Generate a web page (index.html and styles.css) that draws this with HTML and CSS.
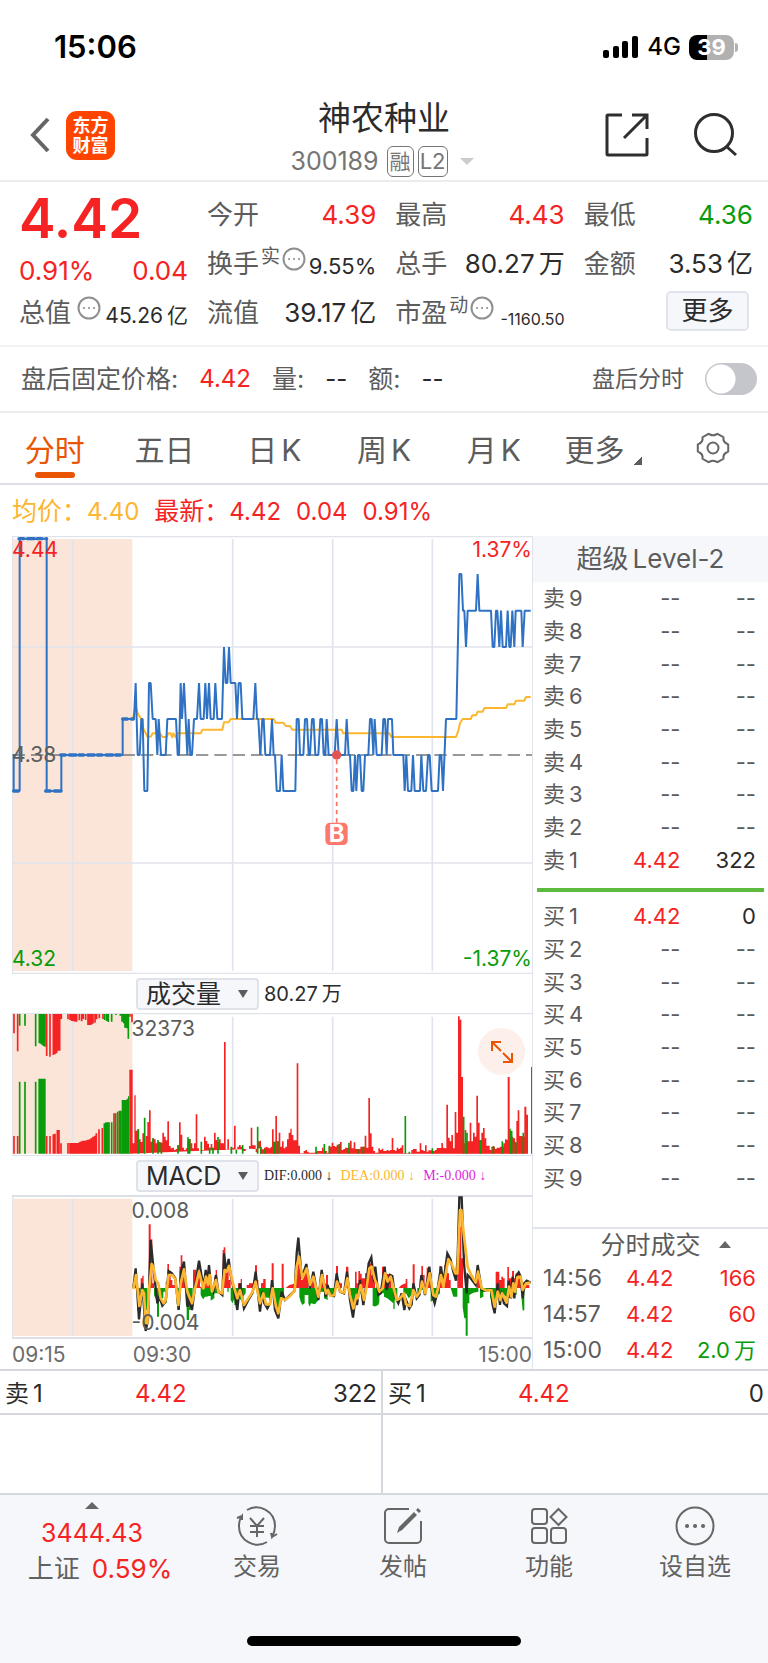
FILE: index.html
```html
<!DOCTYPE html>
<html lang="zh-CN">
<head>
<meta charset="utf-8">
<meta name="viewport" content="width=device-width, initial-scale=1">
<title>神农种业 300189</title>
<link rel="stylesheet" href="styles.css">
</head>
<body>
<div class="status">
  <span class="clock">15:06</span>
  <div class="status-right">
    <svg class="signal" viewBox="0 0 36 22" aria-hidden="true"><rect x="0" y="14" width="6" height="8" rx="2"/><rect x="10" y="10" width="6" height="12" rx="2"/><rect x="19" y="5" width="6" height="17" rx="2"/><rect x="29" y="0" width="6" height="22" rx="2"/></svg>
    <span class="network">4G</span>
    <span class="battery">39</span>
  </div>
</div>

<header class="header">
  <div class="header-side">
    <button class="icon-btn" type="button" aria-label="返回"><svg class="back" viewBox="0 0 20 36"><path d="M18 2 3 18l15 16"/></svg></button>
    <span class="logo">东方<br>财富</span>
  </div>
  <div class="header-title">
    <h1>神农种业</h1>
    <div class="code"><span>300189</span><span class="tag">融</span><span class="tag tag-wide">L2</span><i class="caret"></i></div>
  </div>
  <div class="header-side header-actions">
    <button class="icon-btn" type="button" aria-label="分享"><svg class="action" viewBox="0 0 44 44"><path d="M17 2H3a1 1 0 0 0-1 1v38a1 1 0 0 0 1 1h38a1 1 0 0 0 1-1V25M27 2h15v14M41 3 19 25"/></svg></button>
    <button class="icon-btn" type="button" aria-label="搜索"><svg class="action" viewBox="0 0 44 44"><circle cx="21" cy="20" r="18.500"/><path d="m33 33 10 9"/></svg></button>
  </div>
</header>

<section class="summary">
  <div class="price">
    <strong class="price-now">4.42</strong>
    <div class="row price-change"><span>0.91%</span><span>0.04</span></div>
    <div class="row total"><span class="label">总值 <svg class="more" viewBox="0 0 24 24"><circle cx="12" cy="12" r="10.500"/><path d="M7 12h.1M12 12h.1M17 12h.1"/></svg></span><span class="mid">45.26<span class="unit">亿</span></span></div>
  </div>
  <div class="stats">
    <div class="row"><span class="label">今开</span><span class="up">4.39</span></div>
    <div class="row"><span class="label">最高</span><span class="up">4.43</span></div>
    <div class="row"><span class="label">最低</span><span class="down">4.36</span></div>
    <div class="row"><span class="label">换手<sup>实</sup><svg class="more" viewBox="0 0 24 24"><circle cx="12" cy="12" r="10.500"/><path d="M7 12h.1M12 12h.1M17 12h.1"/></svg></span><span class="mid">9.55%</span></div>
    <div class="row"><span class="label">总手</span><span>80.27<span class="unit">万</span></span></div>
    <div class="row"><span class="label">金额</span><span>3.53<span class="unit">亿</span></span></div>
    <div class="row"><span class="label">流值</span><span>39.17<span class="unit">亿</span></span></div>
    <div class="row"><span class="label">市盈<sup>动</sup><svg class="more" viewBox="0 0 24 24"><circle cx="12" cy="12" r="10.500"/><path d="M7 12h.1M12 12h.1M17 12h.1"/></svg></span><span class="tiny">-1160.50</span></div>
    <div class="row row-end"><button class="more-btn" type="button">更多</button></div>
  </div>
</section>

<section class="after">
  <span class="label">盘后固定价格:</span><span class="up">4.42</span>
  <span class="label">量:</span><span>--</span>
  <span class="label">额:</span><span>--</span>
  <label class="after-switch" for="after-toggle">盘后分时</label>
  <input class="toggle" id="after-toggle" type="checkbox" role="switch">
</section>

<nav class="tabs">
  <a class="active" href="#minute">分时</a>
  <a href="#five">五日</a>
  <a href="#day">日<span class="unit">K</span></a>
  <a href="#week">周<span class="unit">K</span></a>
  <a href="#month">月<span class="unit">K</span></a>
  <a href="#more">更多<i class="corner"></i></a>
  <button class="icon-btn" type="button" aria-label="设置"><svg class="gear" viewBox="0 0 34 32"><path d="M14 2.500q3 1.600 6 0l1.500-.7 6 3.400-.1 2q.3 3 3 4.300l1.800 1v7l-1.800 1q-2.700 1.300-3 4.300l.1 2-6 3.400-1.500-.7q-3-1.600-6 0l-1.500.7-6-3.400.1-2q-.3-3-3-4.300l-1.800-1v-7l1.800-1q2.700-1.300 3-4.300l-.1-2 6-3.400z"/><circle cx="17" cy="16" r="5.500"/></svg></button>
</nav>

<div class="legend">
  <span class="avg">均价：<b>4.40</b></span>
  <span class="up">最新：<b>4.42</b></span>
  <span class="up"><b>0.04</b></span>
  <span class="up"><b>0.91%</b></span>
</div>

<main class="market">
  <div class="charts">
    <div class="plot">
      <svg viewBox="36 18 1560 1314" role="img" aria-label="分时走势">
        <path class="frame" d="M36 20H1596M36 1330H1596M38 20V1330"/>
        <rect class="auction" x="39" y="27" width="358" height="1296"/>
        <path class="grid-line" d="M218 27V1323M698 27V1323M998 27V1323M1297 27V1323M38 351H1596M38 999H1596"/>
        <path class="middle" d="M38 675H1596"/>
        <path class="average" d="M398 567 407 530 413 550 422 565 430 595 442 620H452L458 610H480L487 621H500L505 610H512L517 622 520 610 527 622 532 610H602L607 599H667L672 577H686L692 567H822L826 578H850L857 588H870L877 599H1025L1030 610H1168L1174 621H1368L1374 605 1380 580 1388 567H1412L1417 556H1428L1433 545H1448L1453 534H1518L1523 523H1543L1548 512H1573L1578 501H1592"/>
        <path class="line auction-line" d="M57 26H140M137 783H184M182 675H368M41 783H59M368 567H400"/>
        <path class="line" d="M41 672V783H59V26H140V783H184V675H368V567H402L407 459 413 675H419L424 567H428L433 783H442L447 459H452L458 567H467L472 675 476 567 483 675H497L502 567H528L533 675H537L542 459 546 567 552 459 557 567 562 675 566 567 571 675H576L582 567H591L597 459 602 567H611L616 459 621 567 627 459 632 567H641L646 459 652 567H666L672 351 677 459H682L687 351 692 459H706L711 567 716 459H722L727 567H760L766 459 771 567H775L781 675"/>
        <path class="line" transform="translate(780 0)" d="M1 675 7 567H11L16 675H30L36 567 41 675H45L50 783H60L65 675 70 783H106L110 567H116L120 675H130L135 567H141L146 675H150L156 567H161L166 675H175L181 567H186L191 675H196L200 567 206 675H224L230 567 236 675H255L260 567 266 675H270L275 783H280L285 675 289 783 294 675H300L305 783H310L315 675H325L330 567H335L340 675 344 567 350 675H365L370 567H375L380 675 384 567H396L400 675H430L434 783 439 675 444 783H454L459 675 464 783H480L484 675 490 783H498L504 675H509L515 783H534L539 675H544L549 783 558 567H589L598 132H604L609 242H613L618 351 623 242H648L653 132 658 242H693L698 351H703L708 242H712L718 351 723 242 728 351H738L743 242 748 351H752L757 242 763 351 767 242H784L788 351 794 242H812"/>
        <path class="pin-line" d="M1010 690V880"/>
        <circle class="pin-dot" cx="1010" cy="675" r="14"/>
        <rect class="pin-box" x="976" y="878" width="67" height="67" rx="14"/>
        <text class="pin-text" x="1010" y="936" text-anchor="middle">B</text>
      </svg>
      <span class="mark top-left up">4.44</span>
      <span class="mark top-right up">1.37%</span>
      <span class="mark mid-left">4.38</span>
      <span class="mark bottom-left down">4.32</span>
      <span class="mark bottom-right down">-1.37%</span>
    </div>

    <div class="tools">
      <span class="picker"><select aria-label="指标一"><option>成交量</option></select></span>
      <span>80.27<span class="unit">万</span></span>
    </div>
    <div class="plot">
      <svg viewBox="36 129 1560 429" role="img" aria-label="成交量">
        <path class="frame" d="M36 131H1596M36 557H1596M38 131V557"/>
        <rect class="auction" x="39" y="133" width="358" height="418"/>
        <path class="grid-line" d="M218 140V551M698 140V551M998 140V551M1297 140V551"/>
        <path class="bars bars-up" d="M42 132V190M53 132V244M140 132V258M150 132V260M160 132V255M165 132V253M170 132V250M175 132V242M179 132V242M184 132V147M204 132V148M210 132V150M215 132V153M220 132V154M225 132V155M230 132V155M238 132V151M245 132V154M250 132V147M257 132V150M264 132V165M269 132V165M274 132V164M279 132V161M285 132V158M290 132V148M298 132V145M309 132V147M390 132V140M396 132V157M42 498V551M53 498V551M140 498V551M150 498V551M160 493V551M165 491V551M172 480V551M177 480V551M183 520V551M204 519V551M210 519V551M215 519V551M220 519V551M225 519V551M230 519V551M235 519V551M239 516V551M244 514V551M249 512V551M254 512V551M259 511V551M264 509V551M269 508V551M274 504V551M279 500V551M284 497V551M289 490V551M297 478V551M307 474V551M342 430V551M353 425V551"/>
        <path class="bars bars-down" d="M59 132V167M75 132V167M107 132V229M118 132V220M122 132V221M126 132V224M130 132V228M135 132V230M314 132V150M320 132V153M325 132V156M335 132V155M348 132V135M361 132V137M366 132V155M371 132V160M375 132V173M380 132V175M385 132V206M59 335V551M75 335V551M107 335V551M313 460V551M318 457V551M323 457V551M327 457V551M335 457V551M347 430V551M358 422V551M363 422V551"/>
        <path class="fill-down" d="M115 551V326H137V551ZM365 551V390H380V386H384V379H388V551Z"/>
        <path class="fill-up" d="M388 551V299H398V520H403V376H407V482H412V478H417V508H422V516H427V490H432V550H437V498H442V456H447V421H452V515H457V505H462V508H467V520H472V515H477V516H482V518H487V488H492V500H497V511H502V454H507V528H512V535H517V533H522V540H527V537H532V526H537V457H542V494H547V533H552V540H557V535H562V515H567V507H572V520H577V535H582V520H587V433H592V535H597V542H602V540H612V500H617V513H622V521H627V533H632V522H637V533H642V488H647V510H652V515H657V508H662V520H667V520H672V216H677V540H682V508H687V540H692V533H702V467H707V540H712V530H717V525H722V530H727V543H737V538H742V537H747V528H752V473H757V526H767V547H772V514H782V535H785Z"/>
        <path class="fill-up" transform="translate(780 0)" d="M0 551V512H3V538H12V533H17V530H22V533H27V535H32V530H36V478H41V515H46V438H51V514H56V488H61V530H66V514H71V535H76V530H81V508H86V488H91V476H95V495H100V511H110V280H115V527H120V550H131V543H136V540H141V545H146V548H166V545H171V543H181V543H186V533H191V543H201V548H206V530H215V518H220V528H225V530H230V524H240V516H245V540H250V537H255V533H270V512H275V535H281V517H286V537H301V530H314V497H319V533H325V384H330V490H335V530H340V543H345V548H355V535H360V540H365V536H370V543H380V540H385V542H390V540H395V504H400V540H405V542H410V533H415V537H420V533H425V526H430V550H454V540H459V537H470V545H479V520H484V540H490V543H495V526H500V545H505V541H515V543H525V540H530V534H544V519H549V533H554V535H559V404H564V503H569V514H574V495H579V535H584V426H589V488H594V139H599V149H604V321H609V520H614V480H619V514H629V458H634V514H639V488H644V500H649V377H654V458H659V510H664V488H669V474H674V505H679V527H689V540H694V530H705V537H710V533H720V530H730V520H735V508H740V510H743V321H749V500H760V505H765V520H769V453H773V421H778V498H788V500H793V410H799V434H804V551ZM813 551V291H818V551Z"/>
        <path class="bars bars-down" d="M415 478V551M434 443V551M459 505V551M474 510V551M484 518V551M534 526V551M564 502V551M569 508V551M604 515V551M629 533V551M639 533V551M654 501V551M694 530V551M709 540V551M728 525V551M773 470V551M783 530V551M795 538V551M823 515V551M833 514V551M948 530V551M973 522V551M988 527V551M1018 522V551M1047 518V551M1073 537V551M1090 530V551M1216 438V551M1228 545V551M1297 535V551M1391 440V551M1401 488V551M1441 510V551M1480 528V551M1507 514V551M1530 476V551M1535 482V551M1547 516V551M1570 488V551"/>
      </svg>
      <span class="mark after-auction">32373</span>
      <button class="expand" type="button" aria-label="全屏"><svg viewBox="0 0 24 24"><path d="M2 11V2h9M2 2l9 9M13 22h9v-9M22 22l-9-9"/></svg></button>
    </div>

    <div class="tools">
      <span class="picker"><select aria-label="指标二"><option>MACD</option></select></span>
      <span class="macd"><span>DIF:0.000 ↓</span><span class="avg">DEA:0.000 ↓</span><span class="m">M:-0.000 ↓</span></span>
    </div>
    <div class="plot">
      <svg viewBox="36 675 1560 432" role="img" aria-label="MACD">
        <path class="frame heavy" d="M36 678H1596M36 1104H1596"/>
        <path class="frame" d="M38 678V1104"/>
        <rect class="auction" x="39" y="686" width="358" height="412"/>
        <path class="grid-line" d="M218 686V1098M698 686V1098M998 686V1098M1297 686V1098"/>
        <path class="fill-up" d="M400 954H403V925H409V954H422V925H427V917H431V954H446V763H452V808H457V940H462V954H497V935H502V882H507V905H512V930H517V945H530V954H538V890H542V856H547V890H552V935H557V950H562V954H579V899H589V905H600V950H605V954H609V935H620V910H626V940H632V954H643V920H647V900H651V954H668V840H671V832H676V895H686V930H692V954H714V940H722V927H726V954H740V945H747V940H760V930H765V886H771V930H775V954H785V940H791V927H797V954Z"/>
        <path class="fill-down" d="M412 954V1020L417 1034 422 990V954H431V990L435 1020H442V954H462V975L466 985H471V1040H477V985H490V965H496V954H530V1000L534 1024 539 990V954H560V1050H567V1020H572V1000L578 985V954H602V975L609 988 615 980H619L627 978H632V992L643 985V970H655V954H682V965H686V954H692V990L698 1000 703 985V1005H715V980L722 990 737 970V954H775V1000L780 990 785 970V954H793V980L810 985V954Z"/>
        <g transform="translate(780 0)">
          <path class="fill-up" d="M3 954V940H10V927H15V954H35V880H41V954H65V881H71V954H77L88 945 100 942H106V880H118V895H123V930H128V905H136V890H141V910H145V954H154V932H164V954H180V930H187V940H198V915H204V954H228V888H234V940H246V954H258V890H265V954H285V905H290V940H295V903H300V911H305V925H315V910H324V880H334V915H345V954H366V890H372V925H378V912H394V954H416L424 945 437 940V927H442V954H458V883H464V954H484V888H489V915H494V954H500V893H510V910H515V954H538V888H544V930H549V954H553V885H558V870H562V910H567V930H572V954H592V850H598V770H604V865H609V954H650V910H657V930H662V954H707V905H718V930H724V920H729V925H734V954H742V891H747V925H756V903H762V925H767V910H772V915H777V925H782V945H808V954Z"/>
          <path class="fill-down" d="M0 954V1027L3 990 15 985 32 975V970H40V985L50 1015 62 1010V985H72V954H118V980L122 995 127 1005 134 1000V975H145V1000L149 1010 153 1000 165 1003 175 990V965H192V985L203 990V970H210V982L222 975V954H268V985L276 1020 283 1008 293 990V970H310V954H338V1008H343V1010L355 1005 358 995V970H372V980L382 985 400 1000V1017H404V990L412 985V954H430V980L438 970 446 985 455 975V954H472V975H481V960H498V954H512V995L522 990 525 985 540 970V954H572L580 980H592V954H608V1012L613 1045H617V1097H623V1000H628V975L640 968 655 965V954H660V985L670 980V965L690 963V980L698 1010 705 995 714 965H722L738 980 750 985 755 970H763L770 975V954H785V990L788 1022 793 1020V965L797 954Z"/>
        </g>
        <path class="dif" d="M400 954 407 895 417 1048 427 940 437 1083 444 1050 452 810 460 890 472 1000 478 980 487 1007 497 995 506 903 516 910 526 925 536 1020 543 905 552 875 562 1010 567 990 576 1020 585 950 597 872 606 925 612 945 617 900 622 935 627 885 633 950 640 965 648 915 655 965 667 975 672 850 679 905 686 867 692 915 702 960 712 1020 720 940 732 1015 745 990 758 968 767 905 780 1025 787 965 793 1000 802 1015 810 1000 816 930 825 1020 835 1045 845 965 855 990 870 975 884 962 890 850 895 803 905 925 919 882 930 955 940 905 955 990 965 900 977 980 983 945 990 975 1002 978 1010 910 1020 965 1032 970 1041 905 1050 990 1059 1043 1067 980 1071 1005 1080 930 1090 1005 1098 950 1106 880 1114 862 1122 935 1126 890 1135 975 1142 970 1154 890 1160 960 1170 915 1177 918 1185 980 1195 1000 1205 970 1213 1020 1218 990 1228 1015 1235 1003 1240 940 1250 985 1258 975 1264 915 1275 975 1288 890 1297 975 1304 1000 1310 975 1323 890 1330 940 1342 850 1352 870 1360 905 1368 932 1373 860 1378 682H1385L1392 880 1400 970 1403 915 1412 925 1427 945 1433 885 1445 960 1460 962 1473 958 1478 1005 1484 1030 1493 940 1500 1005 1504 965 1512 1000 1521 1008 1526 932 1533 985 1538 920 1543 985 1549 917 1556 907 1562 920 1568 985 1573 940 1580 932 1592 938"/>
        <path class="dea" d="M400 957 408 915 418 1008 427 960 432 970 437 1058 442 1060 448 950 455 882 460 890 467 930 475 940 482 985 491 1000 497 990 506 915 517 915 526 928 535 1005 542 940 552 898 562 965 576 1000 583 965 597 905 610 955 618 920 624 945 629 915 636 965 648 930 655 965 666 970 674 900 680 905 687 888 700 945 712 985 720 960 732 1005 745 985 758 965 767 935 780 1000 790 970 798 1003 809 1003 818 955 828 1010 835 1030 843 985 855 990 870 978 884 962 890 890 897 860 907 925 920 895 930 945 940 920 955 980 966 915 978 970 984 960 992 978 1003 975 1011 935 1021 965 1033 968 1042 925 1050 975 1060 1015 1070 975 1073 985 1082 945 1092 990 1100 950 1108 895 1115 890 1125 930 1130 940 1138 965 1148 955 1155 910 1163 935 1172 920 1180 950 1190 990 1200 985 1212 970 1218 1003 1230 1008 1240 960 1250 980 1260 965 1266 935 1276 970 1289 910 1300 975 1308 980 1323 915 1330 950 1345 868 1354 880 1366 910 1372 910 1380 720H1384L1392 800 1403 890 1412 912 1427 938 1434 905 1445 955 1460 962 1474 960 1484 1010 1493 965 1501 990 1506 970 1520 998 1527 950 1534 980 1540 940 1545 965 1552 922 1562 920 1568 960 1578 940 1592 938"/>
      </svg>
      <span class="mark after-auction">0.008</span>
      <span class="mark after-auction low">-0.004</span>
    </div>
    <div class="times"><span>09:15</span><span class="second">09:30</span><span>15:00</span></div>
  </div>

  <aside class="book">
    <h2>超级<span class="unit">Level-2</span></h2>
    <table class="levels sells">
      <tr><th scope="row">卖<span class="unit">9</span></th><td>--</td><td>--</td></tr>
      <tr><th scope="row">卖<span class="unit">8</span></th><td>--</td><td>--</td></tr>
      <tr><th scope="row">卖<span class="unit">7</span></th><td>--</td><td>--</td></tr>
      <tr><th scope="row">卖<span class="unit">6</span></th><td>--</td><td>--</td></tr>
      <tr><th scope="row">卖<span class="unit">5</span></th><td>--</td><td>--</td></tr>
      <tr><th scope="row">卖<span class="unit">4</span></th><td>--</td><td>--</td></tr>
      <tr><th scope="row">卖<span class="unit">3</span></th><td>--</td><td>--</td></tr>
      <tr><th scope="row">卖<span class="unit">2</span></th><td>--</td><td>--</td></tr>
      <tr><th scope="row">卖<span class="unit">1</span></th><td class="up">4.42</td><td class="dark">322</td></tr>
    </table>
    <div class="ratio"></div>
    <table class="levels">
      <tr><th scope="row">买<span class="unit">1</span></th><td class="up">4.42</td><td class="dark">0</td></tr>
      <tr><th scope="row">买<span class="unit">2</span></th><td>--</td><td>--</td></tr>
      <tr><th scope="row">买<span class="unit">3</span></th><td>--</td><td>--</td></tr>
      <tr><th scope="row">买<span class="unit">4</span></th><td>--</td><td>--</td></tr>
      <tr><th scope="row">买<span class="unit">5</span></th><td>--</td><td>--</td></tr>
      <tr><th scope="row">买<span class="unit">6</span></th><td>--</td><td>--</td></tr>
      <tr><th scope="row">买<span class="unit">7</span></th><td>--</td><td>--</td></tr>
      <tr><th scope="row">买<span class="unit">8</span></th><td>--</td><td>--</td></tr>
      <tr><th scope="row">买<span class="unit">9</span></th><td>--</td><td>--</td></tr>
    </table>
    <div class="deals">
      <h3>分时成交 <i class="caret-up"></i></h3>
      <table>
        <tr><th scope="row">14:56</th><td class="up">4.42</td><td class="up">166</td></tr>
        <tr><th scope="row">14:57</th><td class="up">4.42</td><td class="up">60</td></tr>
        <tr><th scope="row">15:00</th><td class="up">4.42</td><td class="down">2.0<span class="unit">万</span></td></tr>
      </table>
    </div>
  </aside>
</main>

<section class="best">
  <div class="best-side"><div class="best-row"><span>卖<span class="unit">1</span></span><span class="up">4.42</span><span>322</span></div></div>
  <div class="best-side"><div class="best-row"><span>买<span class="unit">1</span></span><span class="up">4.42</span><span>0</span></div></div>
</section>

<footer class="footer">
  <nav class="bottom">
    <a class="index" href="#index"><i class="caret-up"></i><span class="up">3444.43</span><span class="index-name">上证<span class="up">0.59%</span></span></a>
    <a href="#trade"><svg viewBox="0 0 44 40"><path d="M12 4a18.500 18.500 0 0 1 28 16q0 6-3 11l-1-4M37 31l5-3M32 36A18.500 18.500 0 0 1 4 20q0-6 3-10v4M7 10l-5 2M15 12l7 8 7-8M22 20v11M15 20h14M15 26h14"/></svg><span>交易</span></a>
    <a href="#post"><svg viewBox="0 0 44 40"><path d="M28 3H8a4 4 0 0 0-4 4v26a4 4 0 0 0 4 4h28a4 4 0 0 0 4-4V15"/><path class="solid" d="M16 27l2-6L33 6l3 3-15 15zM35 4l2-2 3 3-2 2z"/></svg><span>发帖</span></a>
    <a href="#tools"><svg viewBox="0 0 44 40"><rect x="5" y="3" width="15" height="15" rx="3"/><rect x="5" y="22" width="15" height="15" rx="3"/><rect x="24" y="22" width="15" height="15" rx="3"/><path d="m31.500 3 8 8-8 8-8-8z"/></svg><span>功能</span></a>
    <a href="#favorite"><svg viewBox="0 0 44 40"><circle cx="22" cy="20" r="18.500"/><path class="dots" d="M14 20h.1M22 20h.1M30 20h.1"/></svg><span>设自选</span></a>
  </nav>
  <div class="home"></div>
</footer>
</body>
</html>
```
FILE: styles.css
```css
* { box-sizing: border-box; }

:root {
  --up: #f52323;
  --down: #0a9b0a;
  --gray: #5c5c5c;
  --dark: #2b2b2b;
  --line: #e1e3ea;
  --accent: #ea5504;
}

body {
  margin: 0;
  background: #fff;
  color: var(--dark);
  font-family: Inter, "Noto Sans CJK SC", sans-serif;
  font-size: 24px;
  line-height: 32px;
}

h1, h2, h3 { margin: 0; font-weight: 400; }
a { color: inherit; text-decoration: none; }
button, select { font: inherit; color: inherit; }
table { border-collapse: collapse; width: 100%; }
th, td { padding: 0; font-weight: 400; }
b { font-weight: 400; }
i { display: inline-block; }
svg { display: block; fill: none; }

.up { color: var(--up); }
.down { color: var(--down); }
.avg { color: #fdb62f; }
.dark { color: var(--dark); }
.unit { margin-left: 4px; }
.label { color: var(--gray); }

.icon-btn { display: flex; padding: 0; border: 0; background: none; }

/* status bar */
.status { display: flex; justify-content: space-between; align-items: center; height: 94px; padding: 0 34px 0 54px; color: #000; }
.clock { font-size: 31px; font-weight: 600; }
.status-right { display: flex; align-items: center; }
.signal { width: 36px; height: 22px; fill: #000; }
.network { margin: 0 8px; font-size: 24px; font-weight: 500; }
.battery {
  position: relative;
  width: 45px;
  height: 25px;
  border-radius: 8px;
  background: linear-gradient(90deg, #000 40%, #b1b1b1 40%);
  color: #fff;
  font-size: 22px;
  font-weight: 700;
  line-height: 25px;
  text-align: center;
}
.battery::after { content: ""; position: absolute; right: -4px; top: 8px; width: 3px; height: 9px; border-radius: 0 3px 3px 0; background: #b1b1b1; }

/* title bar */
.header { display: grid; grid-template-columns: 1fr auto 1fr; height: 88px; border-bottom: 2px solid #ececee; }
.header-side { display: flex; align-items: center; gap: 16px; padding: 0 31px 4px 30px; }
.header-actions { justify-content: flex-end; gap: 44px; }
.back { width: 20px; height: 36px; stroke: #666; stroke-width: 4; }
.logo { width: 49px; height: 49px; padding: 5px 0; border-radius: 11px; background: #ff4400; color: #fff; font-size: 18px; font-weight: 700; line-height: 20px; text-align: center; }
.header-title { text-align: center; }
.header h1 { font-size: 33px; line-height: 48px; }
.code { display: flex; align-items: center; gap: 4px; padding-right: 4px; font-size: 25px; line-height: 38px; color: #757575; }
.tag { width: 27px; height: 31px; margin-left: 4px; border: 1px solid #757575; border-radius: 6px; font-size: 21px; line-height: 29px; text-align: center; }
.tag-wide { width: 30px; margin-left: 0; font-size: 22px; }
.caret { margin-left: 8px; border: 7px solid transparent; border-top-color: #ccc; border-bottom: 0; }
.action { width: 44px; height: 44px; stroke: #2e2e2e; stroke-width: 3; }

/* quote summary */
.summary { display: grid; grid-template-columns: 169fr 546fr; gap: 19px; height: 165px; padding: 4px 15px 0 19px; border-bottom: 2px solid #f2f2f3; font-size: 26px; }
.price { color: var(--up); }
.price-now { display: block; font-size: 55px; font-weight: 600; line-height: 64px; }
.row { display: flex; justify-content: space-between; align-items: center; white-space: nowrap; }
.price .row { height: 42px; }
.total { color: var(--dark); }
.stats { display: grid; grid-template-columns: repeat(3, 1fr); grid-auto-rows: 49px; column-gap: 19px; padding-top: 4px; }
.row .label { display: flex; align-items: center; }
.row sup { margin: 0 2px 14px; font-size: 19px; line-height: 20px; }
.more { width: 24px; height: 24px; margin-bottom: 10px; stroke: #8f8f8f; stroke-width: 2; stroke-linecap: round; }
.total .more { margin-left: 6px; }
.mid { padding-top: 6px; font-size: 21px; }
.stats .mid { padding-top: 4px; font-size: 22px; }
.tiny { padding-top: 12px; font-size: 16px; }
.row-end { justify-content: flex-end; }
.more-btn { width: 83px; height: 40px; margin: 0 4px 4px 0; padding: 0; border: 2px solid #e1e4ec; border-radius: 5px; background: #f6f7fb; }

/* after-hours row */
.after { display: flex; align-items: center; gap: 21px; height: 66px; padding: 0 11px 0 21px; border-bottom: 2px solid #ececee; }
.after .label { font-size: 25px; }
.after-switch { margin-left: auto; color: var(--gray); font-size: 23px; }
.toggle { appearance: none; width: 52px; height: 32px; margin: 0; border-radius: 16px; background: radial-gradient(circle at 16px 16px, #fff 14px, #c4c6cb 15px); }

/* period tabs */
.tabs { display: grid; grid-template-columns: repeat(7, 1fr); place-items: center; height: 72px; border-bottom: 2px solid #dcdee3; color: var(--gray); font-size: 30px; }
.tabs a { display: flex; align-items: flex-end; height: 100%; padding: 16px 0 12px; line-height: 42px; }
.tabs .active { position: relative; color: var(--accent); }
.tabs .active::after { content: ""; position: absolute; left: 50%; bottom: 5px; width: 40px; height: 6px; margin-left: -20px; border-radius: 3px; background: var(--accent); }
.corner { width: 8px; height: 8px; margin: 0 0 6px 10px; background: linear-gradient(135deg, transparent 50%, var(--gray) 50%); }
.gear { width: 34px; height: 32px; stroke: #666; stroke-width: 2; }

.legend { display: flex; align-items: center; gap: 15px; height: 51px; padding: 2px 0 0 12px; font-size: 25px; }
.legend b { font-size: 24px; }

/* chart column and order book */
.market { display: grid; grid-template-columns: 532fr 236fr; }
.charts { padding-left: 12px; }
.plot { position: relative; }
.plot > svg { width: 100%; height: auto; }
.frame { stroke: var(--line); stroke-width: 4; }
.heavy { stroke: #dcdfe5; stroke-width: 6; }
.auction { fill: #fbe5d9; }
.grid-line { stroke: #e1e4ec; stroke-width: 5; }
.middle { stroke: #787878; stroke-width: 4; stroke-dasharray: 37 18; }
.average { stroke: #fdb62f; stroke-width: 6; stroke-linejoin: round; }
.line { stroke: #2f72c3; stroke-width: 6; stroke-linejoin: miter; stroke-miterlimit: 1; }
.auction-line { stroke-width: 10; stroke-linecap: round; stroke-dasharray: 14 12 20 9; }
.pin-line { stroke: #f9705f; stroke-width: 5; stroke-dasharray: 13 12; }
.pin-dot { fill: #e25353; }
.pin-box { fill: #fb786c; }
.pin-text { fill: #fff; font-size: 72px; font-weight: 700; }
.bars { stroke-width: 5; }
.bars-up { stroke: #f52323; }
.bars-down { stroke: #0a9b0a; }
.fill-up { fill: #f52323; }
.fill-down { fill: #0a9b0a; }
.dif { stroke: #2b2b2b; stroke-width: 7; }
.dea { stroke: #fdb62f; stroke-width: 8; stroke-linejoin: round; }

.mark { position: absolute; color: var(--gray); font-size: 21px; line-height: 24px; }
.mark.up { color: var(--up); }
.mark.down { color: var(--down); }
.top-left { left: 0; top: 2px; }
.top-right { right: 0; top: 2px; }
.mid-left { left: 0; top: 50%; margin-top: -12px; }
.bottom-left { left: 0; bottom: 3px; }
.bottom-right { right: 0; bottom: 3px; }
.after-auction { left: 23%; top: 4px; }
.after-auction.low { top: auto; bottom: 4px; }

.tools { display: flex; align-items: center; gap: 5px; height: 39px; padding-left: 124px; font-size: 20px; }
.picker { position: relative; }
.picker::after { content: ""; position: absolute; right: 11px; top: 12px; border: 5px solid transparent; border-top: 8px solid var(--gray); border-bottom: 0; }
.picker select { display: block; appearance: none; width: 123px; height: 32px; padding: 0 8px; border: 2px solid #dfe2e9; border-radius: 4px; background: #f6f7fa; font-size: 25px; line-height: 28px; }
.macd { display: flex; gap: 8px; font-family: "Liberation Serif", serif; font-size: 14px; white-space: nowrap; }
.macd .m { color: #e01fe0; }
.expand { position: absolute; right: 7px; top: 15px; display: grid; place-items: center; width: 47px; height: 47px; padding: 0; border: 0; border-radius: 50%; background: #fdf0ea; }
.expand svg { width: 24px; height: 24px; stroke: var(--accent); stroke-width: 2; }
.times { display: flex; justify-content: space-between; height: 30px; color: #6c6c6c; font-size: 21px; line-height: 31px; }
.second { margin-right: auto; margin-left: 67px; }

.book { border-left: 1px solid var(--line); color: var(--gray); }
.book h2 { height: 46px; background: #f6f7fa; font-size: 26px; line-height: 46px; text-align: center; }
.levels { height: 294px; }
.book table { table-layout: fixed; }
.book th { width: 34%; padding-left: 10px; text-align: left; font-size: 22px; line-height: 28px; }
.book td { padding-right: 12px; text-align: right; font-size: 22px; line-height: 28px; }
.levels td:nth-child(2) { padding-right: 10px; }
.ratio { height: 4px; margin: 12px 4px 8px 4px; background: #5cbb3f; }
.deals { margin: 33px 0 1px; border-top: 2px solid var(--line); }
.deals h3 { display: flex; justify-content: center; align-items: center; gap: 18px; height: 31px; padding-left: 30px; font-size: 25px; }
.caret-up { border: 6px solid transparent; border-bottom: 7px solid #666; border-top: 0; }
.deals tr { height: 36px; }
.book .deals th { font-size: 23px; }
.deals td:nth-child(2) { padding-right: 17px; }

/* best bid and ask */
.best { display: grid; grid-template-columns: 381fr 387fr; height: 124px; border-top: 2px solid #d5d8de; }
.best-side + .best-side { border-left: 2px solid #d5d8de; }
.best-row { display: grid; grid-template-columns: 130px 1fr auto; align-items: center; height: 44px; padding: 3px 4px 0 5px; border-bottom: 2px solid #d5d8de; }

/* bottom navigation */
.footer { padding-bottom: 17px; border-top: 2px solid #d5d8de; background: #f6f7fa; }
.bottom { display: grid; grid-template-columns: 184fr 146fr 146fr 146fr 146fr; height: 141px; padding-top: 7px; color: #616161; }
.bottom a { display: flex; flex-direction: column; align-items: center; gap: 5px; padding-top: 4px; }
.bottom .index { gap: 4px; padding-top: 0; font-size: 25px; }
.index .caret-up { margin-bottom: 4px; border-left-width: 7px; border-right-width: 7px; }
.index-name { display: flex; gap: 12px; padding-left: 16px; font-size: 26px; }
.bottom svg { width: 44px; height: 40px; stroke: #666; stroke-width: 2; }
.bottom .solid { fill: #666; stroke: none; }
.bottom .dots { stroke-width: 4; stroke-linecap: round; }
.home { width: 274px; height: 10px; margin: 0 auto; border-radius: 5px; background: #000; }
```
